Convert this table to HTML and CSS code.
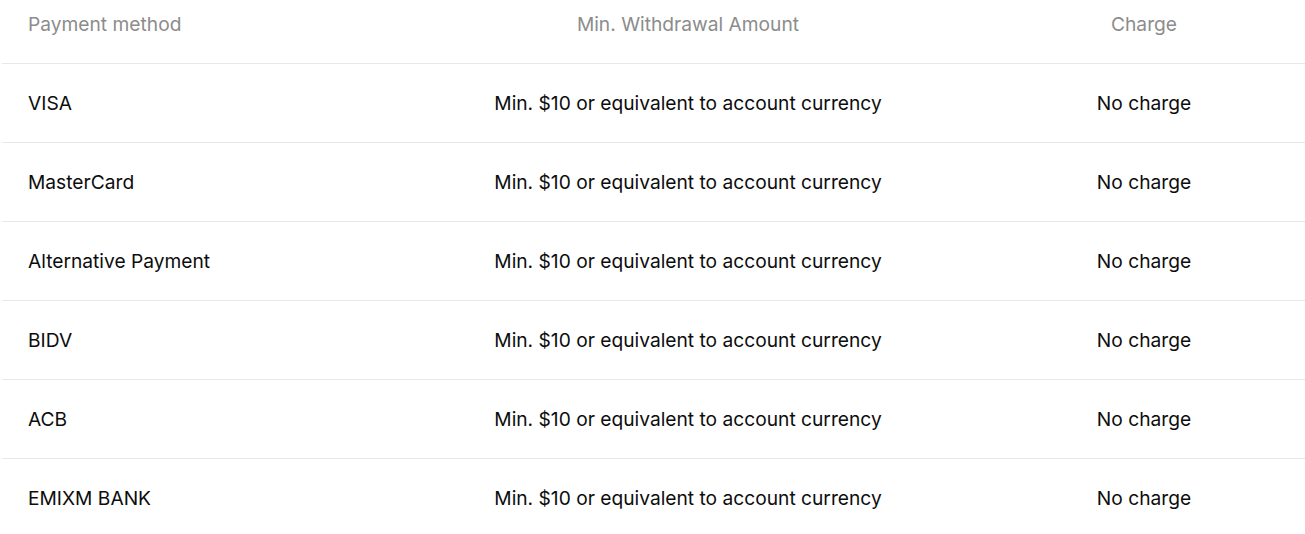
FILE: index.html
```html
<!DOCTYPE html>
<html>
<head lang="en">
    <meta charset="UTF-8">
    <title>Withdrawal</title>
    <link rel="stylesheet" href="styles.css">
</head>
<body>

<table class="fees">
    <thead>
        <tr>
            <th class="col-method">Payment method</th>
            <th class="col-min">Min. Withdrawal Amount</th>
            <th class="col-charge">Charge</th>
        </tr>
    </thead>
    <tbody>
        <tr>
            <td class="col-method">VISA</td>
            <td class="col-min">Min. $10 or equivalent to account currency</td>
            <td class="col-charge">No charge</td>
        </tr>
        <tr>
            <td class="col-method">MasterCard</td>
            <td class="col-min">Min. $10 or equivalent to account currency</td>
            <td class="col-charge">No charge</td>
        </tr>
        <tr>
            <td class="col-method">Alternative Payment</td>
            <td class="col-min">Min. $10 or equivalent to account currency</td>
            <td class="col-charge">No charge</td>
        </tr>
        <tr>
            <td class="col-method">BIDV</td>
            <td class="col-min">Min. $10 or equivalent to account currency</td>
            <td class="col-charge">No charge</td>
        </tr>
        <tr>
            <td class="col-method">ACB</td>
            <td class="col-min">Min. $10 or equivalent to account currency</td>
            <td class="col-charge">No charge</td>
        </tr>
        <tr>
            <td class="col-method">EMIXM BANK</td>
            <td class="col-min">Min. $10 or equivalent to account currency</td>
            <td class="col-charge">No charge</td>
        </tr>
    </tbody>
</table>

</body>
</html>
```
FILE: styles.css
```css
* {
    padding: 0;
    margin: 0;
}
body {
    background-color: #fff;
    font-family: Inter, "Noto Sans", sans-serif;
    color: #0d0d0d;
}
.fees {
    width: 1303px;
    margin-left: 2px;
    border-collapse: collapse;
    table-layout: fixed;
}
.fees th {
    height: 63px;
    padding: 0 26px 15px;
    box-sizing: border-box;
    font-size: 19.2px;
    font-weight: 400;
    color: #8c8c8c;
    vertical-align: middle;
}
.fees td {
    height: 79px;
    padding: 0 26px;
    box-sizing: border-box;
    font-size: 19.2px;
    border-top: 1px solid #e8e8e8;
    vertical-align: middle;
}
.col-method {
    width: 391px;
    text-align: left;
}
.col-min {
    width: 590px;
    text-align: center;
}
.col-charge {
    width: 322px;
    text-align: center;
}
```
